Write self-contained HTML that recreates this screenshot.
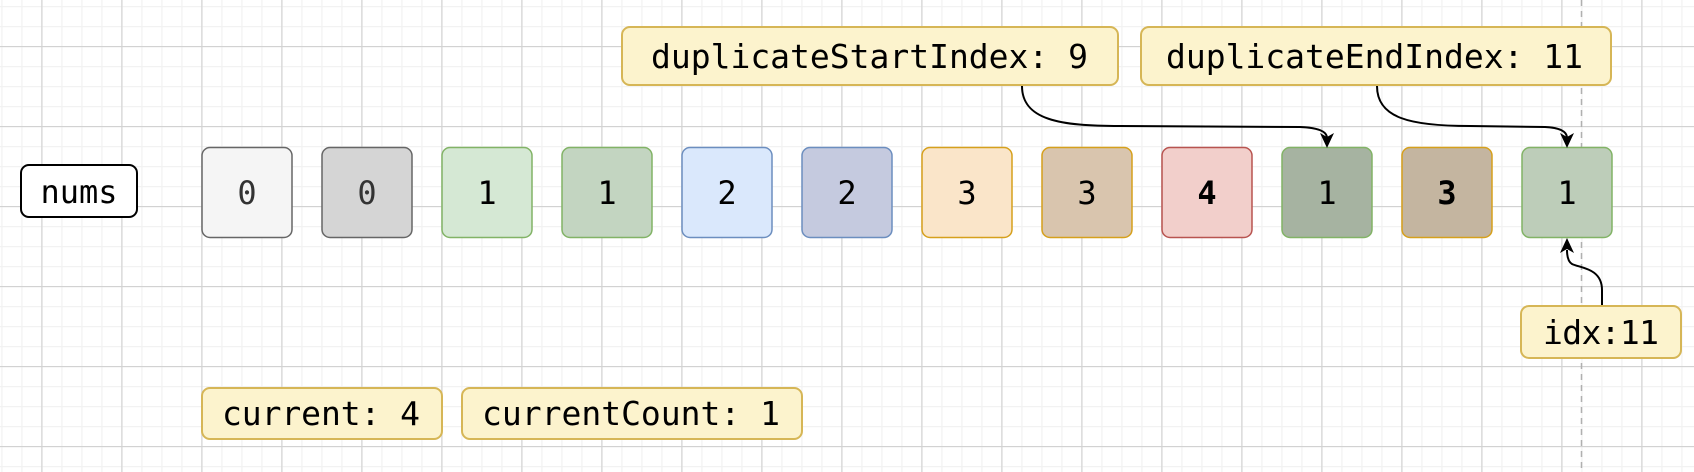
<!DOCTYPE html>
<html><head><meta charset="utf-8"><style>
html,body{margin:0;padding:0;background:#fff;overflow:hidden}
svg{display:block}
text{font-family:"DejaVu Sans Mono","Liberation Mono",monospace;}
</style></head><body>
<svg width="1694" height="472" viewBox="0 0 1694 472" xmlns="http://www.w3.org/2000/svg">
<defs>
<pattern id="minor" x="1.3" y="6" width="20" height="20" patternUnits="userSpaceOnUse">
<path d="M0 0.5H20M0.5 0V20" stroke="#f2f2f2" stroke-width="1.5" fill="none"/>
</pattern>
<pattern id="major" x="41.3" y="46" width="80" height="80" patternUnits="userSpaceOnUse">
<path d="M0 0.5H80M0.5 0V80" stroke="#d2d2d2" stroke-width="1.3" fill="none"/>
</pattern>
</defs>
<rect width="1694" height="472" fill="#fff"/>
<rect width="1694" height="472" fill="url(#minor)"/>
<rect width="1694" height="472" fill="url(#major)"/>
<line x1="1581.5" y1="0" x2="1581.5" y2="472" stroke="#b0b0b0" stroke-width="1.5" stroke-dasharray="6 5"/>

<rect x="21" y="165" width="116" height="52" rx="8" fill="#fff" stroke="#000" stroke-width="2"/>
<text x="79" y="203" font-size="32" text-anchor="middle" textLength="77">nums</text>

<g stroke-width="1.5">
<rect x="202" y="147.5" width="90" height="90" rx="8" fill="#f5f5f5" stroke="#666"/>
<rect x="322" y="147.5" width="90" height="90" rx="8" fill="#d5d5d5" stroke="#666"/>
<rect x="442" y="147.5" width="90" height="90" rx="8" fill="#d5e8d4" stroke="#82b366"/>
<rect x="562" y="147.5" width="90" height="90" rx="8" fill="#c3d5c1" stroke="#82b366"/>
<rect x="682" y="147.5" width="90" height="90" rx="8" fill="#dae8fc" stroke="#6c8ebf"/>
<rect x="802" y="147.5" width="90" height="90" rx="8" fill="#c5cadf" stroke="#6c8ebf"/>
<rect x="922" y="147.5" width="90" height="90" rx="8" fill="#fae5c9" stroke="#d6a01c"/>
<rect x="1042" y="147.5" width="90" height="90" rx="8" fill="#d9c5ae" stroke="#d6a01c"/>
<rect x="1162" y="147.5" width="90" height="90" rx="8" fill="#f2cfcb" stroke="#b85450"/>
<rect x="1282" y="147.5" width="90" height="90" rx="8" fill="#a6b3a1" stroke="#82b366"/>
<rect x="1402" y="147.5" width="90" height="90" rx="8" fill="#c4b5a0" stroke="#d6a01c"/>
<rect x="1522" y="147.5" width="90" height="90" rx="8" fill="#bdcdb9" stroke="#82b366"/>
</g>
<g font-size="32" text-anchor="middle">
<text x="247" y="204" fill="#333">0</text>
<text x="367" y="204" fill="#333">0</text>
<text x="487" y="204">1</text>
<text x="607" y="204">1</text>
<text x="727" y="204">2</text>
<text x="847" y="204">2</text>
<text x="967" y="204">3</text>
<text x="1087" y="204">3</text>
<text x="1207" y="204" font-weight="bold">4</text>
<text x="1327" y="204">1</text>
<text x="1447" y="204" font-weight="bold">3</text>
<text x="1567" y="204">1</text>
</g>

<g fill="#fcf3cd" stroke="#d6b656" stroke-width="2">
<rect x="622" y="27" width="496" height="58" rx="8"/>
<rect x="1141" y="27" width="470" height="58" rx="8"/>
<rect x="1521" y="306" width="160" height="52" rx="8"/>
<rect x="202" y="388" width="240" height="51" rx="8"/>
<rect x="462" y="388" width="340" height="51" rx="8"/>
</g>
<g font-size="33">
<text x="651" y="68" textLength="437">duplicateStartIndex: 9</text>
<text x="1166" y="68" textLength="417">duplicateEndIndex: 11</text>
<text x="1543" y="344" textLength="116">idx:11</text>
<text x="222" y="425" textLength="198">current: 4</text>
<text x="482" y="425" textLength="298">currentCount: 1</text>
</g>

<g fill="none" stroke="#000" stroke-width="2">
<path d="M1022 86 C1022 120 1060 126 1120 126 L1300 127 Q1327 128 1327 138"/>
<path d="M1377 86 C1377 118 1410 126 1470 126 L1545 127 Q1567 128 1567 138"/>
<path d="M1602 305 L1602 290 C1602 268 1580 268 1572 264 Q1567 261 1567 250"/>
</g>
<g fill="#000">
<path d="M1327 148 L1320 133 L1327 137 L1334 133 Z"/>
<path d="M1567 148 L1560 133 L1567 137 L1574 133 Z"/>
<path d="M1567 238 L1560 253 L1567 249 L1574 253 Z"/>
</g>
</svg>
</body></html>
